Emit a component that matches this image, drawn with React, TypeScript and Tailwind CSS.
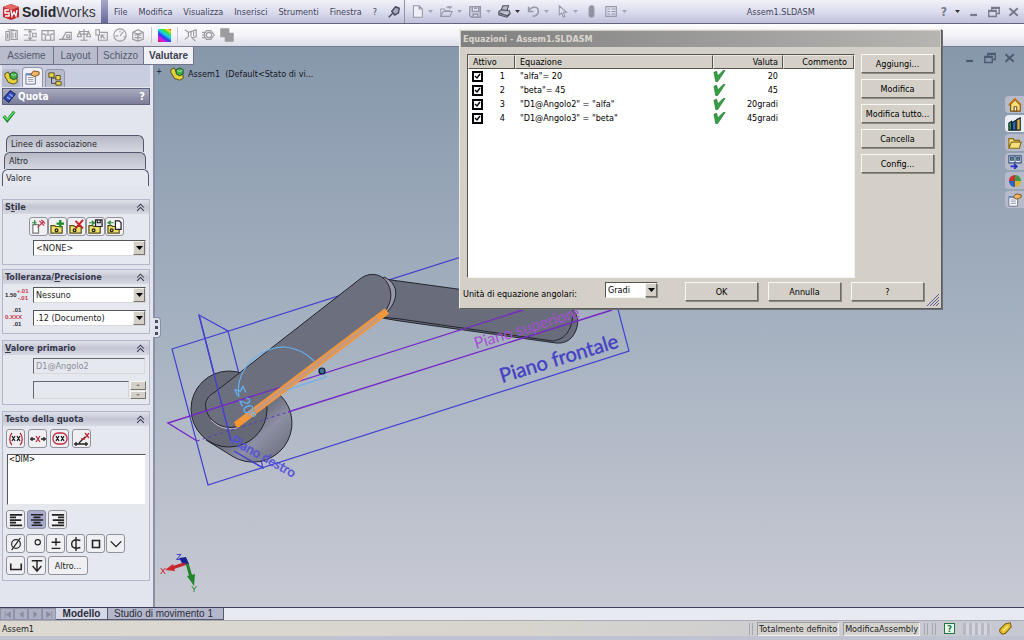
import type { ReactNode } from "react";

const menus = ["File", "Modifica", "Visualizza", "Inserisci", "Strumenti", "Finestra", "?"];

const equations = [
  { id: 1, text: '"alfa"= 20', value: "20" },
  { id: 2, text: '"beta"= 45', value: "45" },
  { id: 3, text: '"D1@Angolo2" = "alfa"', value: "20gradi" },
  { id: 4, text: '"D1@Angolo3" = "beta"', value: "45gradi" },
];

function Icon({ children, size = 14, className = "" }: { children: ReactNode; size?: number; className?: string }) {
  return (
    <svg
      width={size}
      height={size}
      viewBox="0 0 16 16"
      fill="none"
      stroke="currentColor"
      strokeWidth="1.3"
      className={`shrink-0 ${className}`}
      aria-hidden="true"
    >
      {children}
    </svg>
  );
}

function Caret({ dark = false }: { dark?: boolean }) {
  return (
    <svg width="5" height="3" viewBox="0 0 5 3" className="shrink-0" aria-hidden="true">
      <path d="M0 0h5L2.5 3z" fill={dark ? "#333" : "#a3a5b5"} />
    </svg>
  );
}

function WindowButtons({ className = "" }: { className?: string }) {
  return (
    <div className={`flex items-center gap-2 ${className}`}>
      <button aria-label="Riduci a icona">
        <Icon size={12}>
          <path d="M3 12h9" strokeWidth="3" />
        </Icon>
      </button>
      <button aria-label="Ripristina">
        <Icon size={12}>
          <path d="M5 6V2h10v8h-3M5 3h10M1 6h10v8H1zM1 7h10" strokeWidth="1.8" />
        </Icon>
      </button>
      <button aria-label="Chiudi">
        <Icon size={12}>
          <path d="M2 3l11 10M13 3L2 13" strokeWidth="2.6" />
        </Icon>
      </button>
    </div>
  );
}

/* ---------- top bars ---------- */

const quickTools: { name: string; art: ReactNode; caret: boolean; dark?: boolean }[] = [
  { name: "Nuovo", caret: true, art: <path d="M3 1h7l4 4v10H3zM10 1v4h4" fill="#eeeef6" /> },
  { name: "Apri", caret: true, art: <path d="M1 14V5h4l1 2h6v2M1 14l3-6h11l-3 6zM8 4c1-3 4-3 5 0m0 0l1-3m-1 3l-3-1" /> },
  { name: "Salva", caret: true, art: <path d="M1 2h13v13H3l-2-2zM4 2v6h8V2M5 15v-4h6v4M6 4h4" strokeWidth="1.8" /> },
  { name: "Stampa", caret: true, dark: true, art: <path d="M4 6l2-5h7l-2 6M1 8l3-2 10 1 1 4-4 4-10-3zM2 10l9 3 4-3" fill="#b9bccb" /> },
  { name: "Annulla", caret: true, art: <path d="M2 2v6h6M2 8c3-7 12-7 12 0 0 4-4 6-7 6" strokeWidth="2" /> },
  { name: "Seleziona", caret: true, art: <path d="M4 1v11l3-2 2 5 2-1-2-5h4z" fill="#e0e1ee" /> },
  { name: "Ricostruisci", caret: false, art: <><rect x="5" y="1" width="6" height="14" rx="3" fill="#8c8e9c" /><circle cx="8" cy="5" r="1" /><circle cx="8" cy="10" r="1" /></> },
  { name: "Opzioni", caret: true, art: <path d="M1 2h13v12H1zM3 5h3M3 8h3M3 11h3M8 5h5M8 8h5M8 11h5" /> },
];

function Header() {
  return (
    <header className="flex h-6 shrink-0 items-center border-b border-[#62647c] bg-linear-to-b from-[#f1f1f8] via-[#dcdded] to-[#c0c1dc]">
      <div className="flex h-full w-[101px] shrink-0 items-center gap-[3px] bg-linear-to-b from-[#f4f4f9] to-[#cfcfdf] pl-[3px]">
        <svg width="16" height="16" viewBox="0 0 16 16" aria-hidden="true">
          <path d="M0 3l8-3 8 3v10l-8 3-8-3z" fill="#c3262c" />
          <path d="M0 3l8-3 8 3-8 3z" fill="#e26a64" />
          <path d="M6 6H2v3h4v3H2M8 6l1 6 2-4 2 4 1-6" fill="none" stroke="#fff" strokeWidth="1.4" />
        </svg>
        <span className="font-['Liberation_Sans',sans-serif] text-sm leading-4 text-[#3b3b44]">
          <b className="text-[#26262d]">Solid</b>Works
        </span>
      </div>
      <div className="h-full w-[7px] shrink-0 bg-linear-to-b from-[#a8a9c8] to-[#67699a]" />
      <nav className="flex h-full shrink-0 items-center gap-[11px] border-r border-[#9092aa] pr-1 pl-1.5 text-[#43455d]">
        {menus.map((m) => (
          <button key={m}>{m}</button>
        ))}
        <button aria-label="Fissa il menu">
          <Icon size={12}>
            <path d="M1 15l5-5M5 7l4 5 5-3 1-6-5-2z" fill="#a7a9bb" strokeWidth="1.8" />
          </Icon>
        </button>
      </nav>
      <div className="flex items-center gap-[7px] pl-1.5 text-[#9799aa]">
        {quickTools.map((t) => (
          <div key={t.name} className="flex items-center gap-1">
            <button aria-label={t.name} className={t.dark ? "text-[#4c4e5e]" : ""}>
              <Icon size={13}>{t.art}</Icon>
            </button>
            {t.caret && <Caret dark={t.dark} />}
          </div>
        ))}
      </div>
      <span className="ml-auto w-[194px] text-[#43455a]">Assem1.SLDASM</span>
      <div className="flex items-center gap-2 pr-1 text-[#77798c]">
        <button className="text-xs font-bold" aria-label="Guida">?</button>
        <Caret dark />
        <WindowButtons />
      </div>
    </header>
  );
}

const evaluateTools: ReactNode[] = [
  <path d="M1 4h4v10H1zM7 3h7v10H7zM3 2h8M9 5v6M12 5v6M3 6v6" />,
  <path d="M1 2h14M1 14h14M1 8h5M8 3v9M6 5l2-2 2 2M6 11l2 2 2-2M11 6h4v4h-4z" />,
  <path d="M1 3h14v11H1zM5 8h6v6H5zM8 3v5M1 7h4M11 7h4" />,
  <path d="M0 13h9M4 12l4-7h6v8H8zM9 8h3v3H9z" />,
  <path d="M8 1v13M4 14h8M2 4h12M0 10l3-6 2 6zM11 10l2-6 3 6zM3 7h10" />,
  <path d="M1 2h4v6H1zM6 5h8v9H4V8M7 8l4 4M7 12V8h4" />,
  <path d="M8 1a7 7 0 100 14A7 7 0 008 1zM8 9l4-5M3 9h3M8 3v2M12 10h2" />,
  <path d="M2 5l6-3 6 3v8l-6 2-6-2zM2 5l6 2 6-2M8 7v8M4 8h8M4 11h8" />,
];

const analysisTools: ReactNode[] = [
  <path d="M1 2l4 3v5l-4 3M5 5l9-3v8l-5 1 4 4M8 4v6M11 4v5" />,
  <path d="M5 3h5l4 5-4 5H5L2 8zM0 5h4M0 8h4M0 11h4M8 5a3 3 0 100 6 3 3 0 000-6z" />,
  <path d="M1 1h9v9H1zM6 6h9v9H6z" fill="#9b9b9b" />,
];

function Toolbar() {
  return (
    <div className="flex h-[22px] shrink-0 items-center gap-1 bg-linear-to-b from-[#fdfdfe] via-[#f4f4f9] to-[#dcdde8] pl-[5px] text-[#9b9b9f]">
      {evaluateTools.map((art, i) => (
        <button key={i} aria-label={`Strumento ${i + 1}`}>
          <Icon>{art}</Icon>
        </button>
      ))}
      <span className="mx-0.5 h-4 w-px bg-[#c5c6d0]" />
      <button
        aria-label="Curvatura"
        className="size-[13px] bg-[linear-gradient(35deg,#e0143c,#e01ee0_22%,#2a3cf0_40%,#18d8e8_58%,#30e040_72%,#f0e020_86%,#f03020)]"
      />
      <span className="mx-0.5 h-4 w-px bg-[#c5c6d0]" />
      {analysisTools.map((art, i) => (
        <button key={i} aria-label={`Analisi ${i + 1}`}>
          <Icon>{art}</Icon>
        </button>
      ))}
    </div>
  );
}

/* ---------- property manager ---------- */

function PartIcon() {
  return (
    <svg width="14" height="14" viewBox="0 0 16 16" aria-hidden="true">
      <path d="M1 3l4-2 2 5 3 2 5 1v4l-4 2-6-2-4-7z" fill="#e8d23c" stroke="#4b4712" />
      <path d="M7 3l4-2 4 2v5l-4 2-4-2z" fill="#3fae49" stroke="#1c4a20" />
      <path d="M8 4l3 1 3-1" stroke="#bdf0bd" fill="none" />
    </svg>
  );
}

function NoteIcon({ size = 15 }: { size?: number }) {
  return (
    <svg width={size} height={size} viewBox="0 0 16 16" aria-hidden="true">
      <path d="M1 4h10v11H1z" fill="#fff" stroke="#5d6b8c" />
      <path d="M1 4h10v2H1z" fill="#6e8fd0" />
      <path d="M3 8h6M3 10h6M3 12h6" stroke="#8a93a8" />
      <path d="M6 5l3-4 6 1v3l-5 2z" fill="#efb665" stroke="#7c4d16" />
    </svg>
  );
}

function TreeIcon() {
  return (
    <svg width="14" height="14" viewBox="0 0 16 16" aria-hidden="true">
      <path d="M4 5v8h6M4 7h6" fill="none" stroke="#333" />
      <path d="M1 1h6v5H1zM9 4h5v5H9zM9 11h6v4H9z" fill="#ecd64a" stroke="#4b4320" />
    </svg>
  );
}

function Group({ title, hot, className = "", children }: { title: string; hot: number; className?: string; children: ReactNode }) {
  return (
    <section className={`border border-[#b4b7c9] bg-[#e6e8f0] ${className}`}>
      <h2 className="flex h-[14px] items-center justify-between bg-linear-to-b from-[#dfe1ea] via-[#c3c5d2] to-[#d6d8e2] pr-1 pl-0.5 font-bold text-[#34364a]">
        <span>
          {title.slice(0, hot)}
          <u>{title[hot]}</u>
          {title.slice(hot + 1)}
        </span>
        <button aria-label={`Comprimi ${title}`}>
          <Icon size={9}>
            <path d="M2 8l6-6 6 6M2 14l6-6 6 6" strokeWidth="1.8" />
          </Icon>
        </button>
      </h2>
      {children}
    </section>
  );
}

function Select({ label, value, options, className = "" }: { label: string; value: string; options: string[]; className?: string }) {
  return (
    <div className={`relative h-4 border border-[#d8d8dc] border-t-[#55565c] border-l-[#55565c] bg-white ${className}`}>
      <select aria-label={label} defaultValue={value} className="block h-full w-full appearance-none pl-0.5 leading-3 text-[#222]">
        {options.map((o) => (
          <option key={o}>{o}</option>
        ))}
      </select>
      <span className="pointer-events-none absolute inset-y-0 right-0 flex w-3 items-center justify-center border border-[#f4f2ea] border-r-[#77756c] border-b-[#77756c] bg-[#d4d0c8]">
        <svg width="7" height="4" viewBox="0 0 7 4" aria-hidden="true">
          <path d="M0 0h7L3.5 4z" fill="#000" />
        </svg>
      </span>
    </div>
  );
}

function Tool({ name, on = false, children }: { name: string; on?: boolean; children: ReactNode }) {
  return (
    <button
      aria-label={name}
      className={`flex h-[19px] w-[19px] shrink-0 items-center justify-center rounded-[3px] border border-[#8f919c] text-[#222] ${on ? "bg-[#a9abcf]" : "bg-[#f0f0f3]"}`}
    >
      {children}
    </button>
  );
}

function Folder() {
  return <path d="M1 7h4l1 1h7v7H1z" fill="#efe06a" stroke="#55501c" />;
}

const styleTools: { name: string; art: ReactNode }[] = [
  { name: "Applica attributi predefiniti", art: <><path d="M2 6h6v9H2z" fill="#fff" stroke="#777" /><path d="M7 9l7-7M9 2l5 5M11 1l4 4" stroke="#c23048" /><path d="M1 4h5M4 1v5" stroke="#2c8a3c" /></> },
  { name: "Aggiungi stile", art: <><Folder /><path d="M11 1v8M7 5h8" stroke="#1c8c2c" strokeWidth="2.4" /><circle cx="7" cy="12" r="1.5" /></> },
  { name: "Elimina stile", art: <><Folder /><path d="M7 2l8 8M15 1L7 10" stroke="#c81c24" strokeWidth="2" /><circle cx="6" cy="12" r="1.5" /></> },
  { name: "Salva stile", art: <><Folder /><path d="M8 1h7v7H8zM10 1v3h3V1" fill="#dfe2ee" /><path d="M1 4h6M4 2l3 2-3 2" stroke="#2c8a3c" /><circle cx="6" cy="12" r="1.5" /></> },
  { name: "Carica stile", art: <><Folder /><path d="M9 2h4l2 2v7H9z" fill="#fff" /><path d="M1 4h6M4 2L1 4l3 2" stroke="#2c8a3c" /><circle cx="5" cy="12" r="1.5" /></> },
];

const symbolTools: { name: string; art: ReactNode }[] = [
  { name: "Diametro", art: <><circle cx="8" cy="8" r="5" /><path d="M3 15L13 1" /></> },
  { name: "Gradi", art: <circle cx="10" cy="6" r="3" /> },
  { name: "Più o meno", art: <path d="M8 1v9M3 6h10M3 13h10" strokeWidth="1.6" /> },
  { name: "Linea centrale", art: <path d="M13 4c-7-2-10 0-10 4s3 6 10 4M8 0v16" strokeWidth="1.6" /> },
  { name: "Quadrato", art: <path d="M4 4h8v8H4z" strokeWidth="1.8" /> },
  { name: "Svasatura", art: <path d="M2 5l6 6 6-6" strokeWidth="1.6" /> },
];

function PropertyManager() {
  return (
    <aside className="relative flex flex-1 flex-col border-r-2 border-[#8b8fa6] bg-[#e3e5ee] pr-[3px] pb-6 pl-0.5 text-[#26272f]">
      <div className="flex h-[22px] items-end gap-0.5 bg-[#c9cde0]">
        <button aria-label="Albero" className="flex h-[18px] w-[18px] items-center justify-center rounded-t-sm bg-[#b9bccd]"><PartIcon /></button>
        <button aria-label="Proprietà" className="flex h-5 w-[21px] items-center justify-center rounded-t-sm border border-b-0 border-[#9295a8] bg-[#eef0f6]"><NoteIcon /></button>
        <button aria-label="Configurazioni" className="flex h-[18px] w-5 items-center justify-center rounded-t-sm border border-b-0 border-[#9295a8] bg-[#b9bccd]"><TreeIcon /></button>
      </div>
      <div className="mt-px flex h-[17px] items-center gap-0.5 border border-[#60627c] bg-linear-to-b from-[#a9abc0] to-[#7b7d98] pr-1 text-[10px] font-bold text-white">
        <Icon size={13}>
          <path d="M1 10L9 1l6 4-8 10z" fill="#3452c8" stroke="#1a2468" />
          <path d="M5 9l4 2M8 5l4 3" stroke="#a8b8f8" />
        </Icon>
        <span className="flex-1">Quota</span>
        <button aria-label="Guida di Quota" className="text-[11px]">?</button>
      </div>
      <button aria-label="Conferma" className="mt-1 w-fit text-[#27a23a]">
        <Icon>
          <path d="M2 8l4 5 8-10" stroke="#1d8a2e" strokeWidth="3.6" />
          <path d="M2 8l4 4 8-9" stroke="#66e070" strokeWidth="1.4" />
        </Icon>
      </button>
      <div className="mt-[12px] flex flex-col" role="tablist">
        <button role="tab" className="mr-1.5 ml-1 h-[17px] rounded-t-md border border-b-0 border-[#55586c] bg-linear-to-b from-[#b7b9c6] to-[#d5d7e0] pl-1 text-left">Linee di associazione</button>
        <button role="tab" className="mr-1 ml-0.5 h-[17px] rounded-t-md border border-b-0 border-[#55586c] bg-linear-to-b from-[#b7b9c6] to-[#d5d7e0] pl-1 text-left">Altro</button>
        <button role="tab" aria-selected="true" className="mr-px h-[17px] rounded-t-md border border-b-0 border-[#55586c] bg-[#e6e8f0] pl-[3px] text-left">Valore</button>
      </div>

      <Group title="Stile" hot={1} className="mt-[13px] h-[66px]">
        <div className="mt-[3px] flex justify-start pl-[26px]">
          {styleTools.map((t) => (
            <Tool key={t.name} name={t.name}><Icon size={15}>{t.art}</Icon></Tool>
          ))}
        </div>
        <Select label="Stile corrente" value="<NONE>" options={["<NONE>"]} className="mt-1 mr-[3px] ml-[30px]" />
      </Group>

      <Group title="Tolleranza/Precisione" hot={11} className="mt-1 h-[65px]">
        <div className="mt-[3px] flex items-center pl-0.5">
          <div className="flex w-7 shrink-0 items-center font-['Liberation_Sans',sans-serif] text-[6px] leading-[7px] font-bold">
            <span>1.50</span>
            <span className="flex flex-col text-[#c8364c]">
              <span>+.01</span>
              <span className="pl-px">-.01</span>
            </span>
          </div>
          <Select label="Tipo di tolleranza" value="Nessuno" options={["Nessuno", "Di base", "Bilaterale"]} className="mr-[3px] flex-1" />
        </div>
        <div className="mt-1 flex items-center pl-0.5">
          <div className="flex w-7 shrink-0 flex-col font-['Liberation_Sans',sans-serif] text-[6px] leading-[7px] font-bold">
            <span className="pl-2">.01</span>
            <span className="text-[#c8364c]">0.XXX</span>
            <span className="pl-2">.01</span>
          </div>
          <Select label="Precisione unità" value=".12 (Documento)" options={[".12 (Documento)", ".1", ".123"]} className="mr-[3px] flex-1" />
        </div>
      </Group>

      <Group title="Valore primario" hot={0} className="mt-[6px] h-[65px]">
        <input aria-label="Nome quota" readOnly value="D1@Angolo2" className="mt-[3px] ml-[30px] block h-4 w-[112px] border border-[#d8d8dc] border-t-[#66676e] border-l-[#66676e] pl-0.5 text-[#8a8c96]" />
        <div className="mt-[7px] ml-[30px] flex h-[18px]">
          <input aria-label="Valore quota" className="w-[96px] border border-[#d8d8dc] border-t-[#66676e] border-l-[#66676e]" />
          <div className="ml-px flex flex-col gap-px">
            {["Aumenta", "Diminuisci"].map((name, i) => (
              <button key={name} aria-label={name} className="flex h-[9px] w-4 items-center justify-center border border-[#f6f5ee] border-r-[#77756c] border-b-[#77756c] bg-[#d4d0c8]">
                <svg width="4" height="2" viewBox="0 0 4 2" aria-hidden="true">
                  <path d={i ? "M0 0h4L2 2z" : "M0 2h4L2 0z"} fill="#8a8880" />
                </svg>
              </button>
            ))}
          </div>
        </div>
      </Group>

      <Group title="Testo della quota" hot={12} className="mt-[6px] h-[170px]">
        <div className="mt-[3px] flex gap-[3px] pl-[3px]">
          <Tool name="Parentesi"><Icon size={16}><path d="M4 2C1 5 1 11 4 14M12 2c3 3 3 9 0 12" stroke="#c02840" /><path d="M4 5l3 5M7 5l-3 5M9 5l3 5M12 5l-3 5" /></Icon></Tool>
          <Tool name="Centra quota"><Icon size={16}><path d="M0 8h5M11 8h5M2 6v4M14 6v4" /><path d="M6 5l4 6M10 5l-4 6" stroke="#c02840" /></Icon></Tool>
          <Tool name="Quota di controllo"><Icon size={16}><rect x="1" y="2" width="14" height="11" rx="5" stroke="#c02840" /><path d="M4 5l3 5M7 5l-3 5M9 5l3 5M12 5l-3 5" /></Icon></Tool>
          <Tool name="Scosta testo"><Icon size={16}><path d="M0 13h14M2 11v4M12 11v4M5 12l6-6" /><path d="M11 2l4 5M15 2l-4 5M7 8h4" stroke="#c02840" /></Icon></Tool>
        </div>
        <textarea aria-label="Testo della quota" defaultValue="<DIM>" className="mt-[6px] ml-1 block h-[51px] w-[139px] resize-none border border-[#e8e8ec] border-t-[#55565c] border-l-[#55565c] bg-white pl-px text-[8px] leading-[10px] text-black" />
        <div className="mt-[5px] flex gap-0.5 pl-[3px]">
          <Tool name="Allinea a sinistra"><Icon><path d="M1 2h14M1 5h7M1 8h13M1 11h7M1 14h14" strokeWidth="2" /></Icon></Tool>
          <Tool name="Centra" on><Icon><path d="M1 2h14M4 5h8M1 8h14M4 11h8M2 14h12" strokeWidth="1.8" /></Icon></Tool>
          <Tool name="Allinea a destra"><Icon><path d="M1 2h14M8 5h7M2 8h13M8 11h7M1 14h14" strokeWidth="2" /></Icon></Tool>
        </div>
        <div className="mt-[5px] flex gap-px pl-[3px]">
          {symbolTools.map((t) => (
            <Tool key={t.name} name={t.name}><Icon>{t.art}</Icon></Tool>
          ))}
        </div>
        <div className="mt-[3px] flex gap-0.5 pl-[3px]">
          <Tool name="Lamatura"><Icon><path d="M2 5v7h12V5" strokeWidth="1.8" /></Icon></Tool>
          <Tool name="Profondità"><Icon><path d="M2 2h12M8 2v12M3 8l5 6 5-6" strokeWidth="1.6" /></Icon></Tool>
          <button className="h-[19px] w-10 rounded-[3px] border border-[#8f919c] bg-[#f0f0f3] text-[#222]">Altro...</button>
        </div>
      </Group>

      {/* splitter grip */}
      <div className="absolute top-[252px] -right-2 flex h-[21px] w-2 flex-col items-center justify-center gap-[3px] rounded-r-sm border border-l-0 border-[#8b8fa6] bg-[#dfe1ec]">
        <span className="size-[3px] bg-[#4a4c60]" />
        <span className="size-[3px] bg-[#4a4c60]" />
        <span className="size-[3px] bg-[#4a4c60]" />
      </div>
    </aside>
  );
}

function CommandTabs() {
  const tab = "h-[18px] shrink-0 border-r border-b border-[#71748c] bg-[#b9bccd]";
  return (
    <div role="tablist" className="relative z-10 flex h-[18px] shrink-0 font-['Liberation_Sans',sans-serif] text-[10px] text-[#55586e]">
      <button role="tab" className={`${tab} w-[54px]`}>Assieme</button>
      <button role="tab" className={`${tab} w-[44px]`}>Layout</button>
      <button role="tab" className={`${tab} w-[46px]`}>Schizzo</button>
      <button role="tab" aria-selected="true" className="h-[18px] w-[50px] shrink-0 border-r border-b border-[#71748c] bg-[#f0f1f6] font-bold text-[#3c3e4e]">
        Valutare
      </button>
    </div>
  );
}

/* ---------- graphics area ---------- */

function Model() {
  return (
    <svg width="869" height="561" viewBox="155 46 869 561" className="absolute top-0 left-0" aria-hidden="true">
      <defs>
        <linearGradient id="side" x1="0" y1="0" x2="1" y2="1">
          <stop offset="0.4" stopColor="#5c5f6d" />
          <stop offset="0.65" stopColor="#8d90a4" />
          <stop offset="1" stopColor="#63666f" />
        </linearGradient>
      </defs>

      {/* planes behind the parts */}
      <g fill="none" strokeWidth="1.2">
        <path d="M172 348L593 214L629 350L208 484Z" stroke="#4340d0" />
        <path d="M199 314L228 330L263 467L234 450Z" stroke="#4340d0" />
      </g>

      {/* second arm */}
      <path d="M384 278L560 302C574 305 580 316 577 326C574 337 567 343 556 342L400 320L382 317Z" fill="#686c7b" stroke="#23252c" />
      <path d="M382 316L400 318L553 340C566 338 573 328 573 309" fill="none" stroke="#23252c" />

      {/* hub */}
      <path d="M206 439L232 455A39 39 0 0 0 280 394L266 385Z" fill="url(#side)" />
      <path d="M206 439L232 455A39 39 0 0 0 280 394" fill="none" stroke="#23252c" />
      <circle cx="229" cy="408" r="38" fill="#656976" stroke="#23252c" />

      {/* first arm */}
      <path d="M384 276C400 283 399 300 385 313L374 300Z" fill="#9699a8" stroke="#23252c" />
      <path
        d="M215 391L360 278C370 270 383 273 388 283C393 292 391 303 385 310L242 424C226 431 209 422 206 408C204 400 208 395 215 391Z"
        fill="#6c6f7e"
      />
      <path d="M266 404V385L382 309L242 424" fill="#6c6f7e" />
      <path
        d="M242 424C226 431 209 422 206 408C204 400 208 395 215 391L360 278C370 270 383 273 388 283C393 292 391 303 385 310"
        fill="none"
        stroke="#23252c"
      />
      <path d="M211 419C218 427 230 430 240 426" fill="none" stroke="#c0c2cc" />

      {/* planes seen through the parts */}
      <g fill="none" strokeWidth="1.4">
        <path d="M199 314L231 440M234 450L263 467" stroke="#4340d0" />
        <path d="M288 411L612 309M197 440L168 422L523 309" stroke="#7628c8" />
        <path d="M197 440L288 411" stroke="#5b3ac0" strokeWidth="1" strokeDasharray="3 3" />
      </g>

      {/* selected edge */}
      <path d="M236 424L387 310" stroke="#f0963c" strokeWidth="7" fill="none" />
      <path d="M248 415L378 317" stroke="#c69a82" strokeWidth="3" />
      <circle cx="238" cy="423" r="3" fill="#f8962c" />

      {/* angular dimension */}
      <g fill="none" stroke="#67b0ec" strokeWidth="1.2">
        <path d="M239 396C234 368 261 345 285 346C296 347 306 352 314 360" />
        <path d="M318 367L326 376L287 389" />
      </g>
      <circle cx="322" cy="370" r="3" fill="#3e6f9c" stroke="#10182c" strokeWidth="1.2" />
      <text x="234" y="388" transform="rotate(66 234 388)" fill="#62b4f4" fontSize="14" fontFamily="Lato, sans-serif">Σ 20°</text>

      <g fontFamily="Lato, sans-serif">
        <text x="502" y="382" transform="rotate(-17 502 382)" fontSize="20" fill="#4341c6" stroke="#4341c6" strokeWidth="0.4">Piano frontale</text>
        <text x="476" y="348" transform="rotate(-17 476 348)" fontSize="16" fill="#a44fd4">Piano superiore</text>
        <text x="230" y="442" transform="rotate(29 230 442)" fontSize="13" fill="#5250d8" stroke="#5250d8" strokeWidth="0.4">Piano destro</text>
      </g>

      {/* triad */}
      <path d="M187 562L172 567" stroke="#c42430" strokeWidth="3" />
      <path d="M165 569l8-6 2 7z" fill="#d0242c" />
      <path d="M187 562L191 576" stroke="#23842c" strokeWidth="3" />
      <path d="M187 575l8-2-1 12z" fill="#23842c" />
      <path d="M179 557l7-1 3 7-7-1z" fill="#1c2290" />
      <g fontSize="9" fontFamily="Liberation Sans, sans-serif">
        <text x="160" y="573" fill="#c42430">X</text>
        <text x="191" y="591" fill="#23842c">Y</text>
        <text x="176" y="559" fill="#2a30c0">Z</text>
      </g>
    </svg>
  );
}

const taskPane: { name: string; on?: boolean; art: ReactNode }[] = [
  { name: "Risorse", art: <><path d="M2 8l6-6 6 6v7H3V8z" fill="#f6df7c" stroke="#7a5312" /><path d="M1 8l7-7 7 7" stroke="#c07818" strokeWidth="2" /><path d="M7 10h3v5H7z" fill="#fff" stroke="#7a5312" /></> },
  { name: "Libreria del progetto", on: true, art: <><path d="M1 7l3-2v10H1z" fill="#2c9c44" stroke="#123" /><path d="M5 6l4-2v11H5z" fill="#2c68c0" stroke="#123" /><path d="M10 3l4-2v14h-4z" fill="#e0b840" stroke="#123" /></> },
  { name: "Esplora file", art: <path d="M1 14V3h5l1 2h6v2M1 14l3-7h11l-2 7z" fill="#f6e07c" stroke="#8a6a18" /> },
  { name: "Tavolozza", art: <><path d="M1 1h14v8H1zM8 1v8" fill="#e8ecf4" stroke="#35507c" /><path d="M3 3h3v3H3zM10 3h3v3h-3z" fill="#78a860" stroke="#35507c" /><path d="M3 13h7M7 10l3 3-3 3" stroke="#1c30c0" strokeWidth="2" /></> },
  { name: "Aspetti", art: <g stroke="none"><path d="M8 8V1a7 7 0 017 7z" fill="#3c9c48" /><path d="M8 8h7a7 7 0 01-7 7z" fill="#e0b428" /><path d="M8 8v7a7 7 0 01-7-7z" fill="#2e62c4" /><path d="M8 8H1a7 7 0 017-7z" fill="#cc3030" /></g> },
];

function Viewport() {
  return (
    <div className="relative min-w-0 flex-1">
      <Model />
      <div className="relative flex items-start justify-between pt-[5px] pr-2">
        <div className="flex items-center gap-1 pt-[14px] pl-px text-[#15171f]">
          <button aria-label="Espandi Assem1" className="mr-1 mb-1 text-[8px]">+</button>
          <PartIcon />
          <span className="whitespace-pre">Assem1  (Default&lt;Stato di vi...</span>
        </div>
        <WindowButtons className="text-[#4d5a70]" />
      </div>
      <div className="absolute top-[49px] right-0 flex flex-col gap-0.5">
        {taskPane.map((t) => (
          <button key={t.name} aria-label={t.name} className={`flex h-[17px] w-[19px] items-center justify-center rounded-l-sm ${t.on ? "bg-[#eceef6]" : "bg-[#b7bacb]"}`}>
            <Icon>{t.art}</Icon>
          </button>
        ))}
        <button aria-label="Proprietà personalizzate" className="flex h-[17px] w-[19px] items-center justify-center rounded-l-sm bg-[#b7bacb]">
          <NoteIcon size={14} />
        </button>
      </div>
    </div>
  );
}

/* ---------- equations dialog ---------- */

const raised = "border border-[#f8f7f2] border-r-[#6f6c64] border-b-[#6f6c64] bg-[#d4d0c8] shadow-[1px_1px_0_#8c8a82] text-black";

function EquationsDialog() {
  const th = "h-[14px] border border-[#eceae2] border-r-[#55534c] border-b-[#55534c] p-0 font-normal";
  return (
    <div role="dialog" aria-label="Equazioni" className="absolute top-[29px] left-[459px] z-20 w-[483px] border border-[#ecebe4] border-r-[#5d5c58] border-b-[#5d5c58] bg-[#d4d0c8] p-px pb-[6px] text-black shadow-[1px_1px_0_#6c7078]">
      <h1 className="flex h-4 items-center bg-linear-to-r from-[#808080] to-[#b6b5b2] pl-0.5 font-bold text-[#d8d5ce]">Equazioni - Assem1.SLDASM</h1>
      <div className="mt-[7px] flex gap-1.5 pr-1.5 pl-1.5">
        <div className="h-[224px] flex-1 border border-[#f6f5f0] border-t-[#55534c] border-l-[#55534c] bg-white">
          <table className="w-full table-fixed border-separate border-spacing-0 text-left">
            <thead className="bg-[#d4d0c8]">
              <tr>
                <th className={`${th} w-[47px] pl-1`}>Attivo</th>
                <th className={`${th} pl-1`}>Equazione</th>
                <th className={`${th} w-[70px] pr-1 text-right`}>Valuta</th>
                <th className={`${th} w-[71px] pr-1.5 text-right`}>Commento</th>
              </tr>
            </thead>
            <tbody>
              {equations.map((eq) => (
                <tr key={eq.id} className="h-[14px]">
                  <td className="p-0 pl-1">
                    <label className="flex items-center">
                      <span className="relative size-[11px]">
                        <input type="checkbox" defaultChecked className="block size-[11px] appearance-none border-2 border-black bg-white" />
                        <svg width="7" height="7" viewBox="0 0 7 7" className="pointer-events-none absolute top-0.5 left-0.5" aria-hidden="true">
                          <path d="M1 3l2 2 3-4" fill="none" stroke="#000" strokeWidth="1.4" />
                        </svg>
                      </span>
                      <span className="w-[22px] text-right">{eq.id}</span>
                    </label>
                  </td>
                  <td className="p-0 pl-[5px] whitespace-nowrap">{eq.text}</td>
                  <td className="p-0 pr-[5px]">
                    <div className="flex items-center justify-between">
                      <svg width="13" height="12" viewBox="0 0 14 12" aria-label="Risolta">
                        <path d="M1 2l3-1 1 5 6-6h2L5 12H3z" fill="#35a044" stroke="#1c6e2a" strokeWidth="0.7" />
                      </svg>
                      <span>{eq.value}</span>
                    </div>
                  </td>
                  <td />
                </tr>
              ))}
            </tbody>
          </table>
        </div>
        <div className="flex w-[73px] flex-col gap-[6px]">
          {["Aggiungi...", "Modifica", "Modifica tutto...", "Cancella", "Config..."].map((b) => (
            <button key={b} className={`h-[19px] whitespace-nowrap ${raised}`}>{b}</button>
          ))}
        </div>
      </div>
      <div className="mt-1 flex items-center pr-4 pl-0.5">
        <label htmlFor="units" className="w-[142px] pt-1">Unità di equazione angolari:</label>
        <div className="relative mb-1 h-4 w-[53px] border border-[#f4f2ea] border-t-[#55534c] border-l-[#55534c] bg-white">
          <select id="units" defaultValue="Gradi" className="block h-full w-full appearance-none pl-0.5 leading-3">
            <option>Gradi</option>
            <option>Radianti</option>
          </select>
          <span className={`pointer-events-none absolute inset-y-0 right-0 flex w-3 items-center justify-center ${raised}`}>
            <svg width="7" height="4" viewBox="0 0 7 4" aria-hidden="true"><path d="M0 0h7L3.5 4z" /></svg>
          </span>
        </div>
        <div className="ml-auto flex gap-[10px] pb-px">
          {["OK", "Annulla", "?"].map((b) => (
            <button key={b} className={`h-[19px] w-[73px] ${raised}`}>{b}</button>
          ))}
        </div>
      </div>
      <svg width="12" height="12" viewBox="0 0 12 12" className="absolute right-0.5 bottom-0.5" aria-hidden="true">
        <path d="M0 12L12 0M3 12l9-9M6 12l6-6M9 12l3-3" stroke="#5a5690" />
      </svg>
    </div>
  );
}

/* ---------- bottom bars ---------- */

function BottomTabs() {
  return (
    <div className="flex h-[13px] shrink-0 border-t border-[#3b3e5c] bg-[#e8eaf1] font-['Liberation_Sans',sans-serif] text-[10px] leading-[11px] text-[#2c2e3c]">
      {["M4 2v12M13 3L6 8l7 5z", "M11 3L5 8l6 5z", "M5 3l6 5-6 5z", "M12 2v12M3 3l7 5-7 5z"].map((d, i) => (
        <button key={d} aria-label={`Scorri schede ${i + 1}`} className="flex w-[14px] items-center justify-center border border-[#8f92a8] bg-[#adb0c3] text-[#888ba0]">
          <Icon size={9}><path d={d} fill="currentColor" /></Icon>
        </button>
      ))}
      <button className="w-[52px] border-r border-b border-[#55586c] bg-[#d5d8e5] font-bold">Modello</button>
      <button className="w-[116px] border-r border-b border-[#55586c] bg-[#b4b7c9] pr-1 whitespace-nowrap">Studio di movimento 1</button>
    </div>
  );
}

function StatusBar() {
  const cell = "flex h-[14px] items-center border border-[#f2f1ee] border-t-[#9c9ca0] border-l-[#9c9ca0] bg-[#d5d3ce] px-px whitespace-nowrap";
  return (
    <footer className="flex h-5 shrink-0 items-center gap-1 border-t border-b-4 border-t-[#a9abb5] border-b-[#bfc2d0] bg-linear-to-r from-[#dcd9d0] via-[#d8d5ce] to-[#c6c8d2] pl-0.5 text-[#1c1d24]">
      <span>Assem1</span>
      <div className="ml-auto h-3 w-1 border-x border-[#a5a7b0]" />
      <div className={cell}>Totalmente definito</div>
      <div className={cell}>ModificaAssembly</div>
      <div className="h-3 w-1 border-x border-[#a5a7b0]" />
      <div className="h-3 w-1 border-x border-[#a5a7b0]" />
      <button aria-label="Guida rapida" className="ml-1 flex size-[11px] items-center justify-center border border-[#287048] bg-[#e4f6ea] font-bold text-[#187838]">?</button>
      <div className="ml-1 h-3 w-7 bg-[repeating-linear-gradient(90deg,#b6b8c2_0_3px,#d4d5dc_3px_6px)]" />
      <button aria-label="Etichette" className="mr-3 ml-1">
        <Icon size={13}>
          <path d="M1 9l7-7 6-1 1 5-7 8-4 1-3-3z" fill="#e8c02c" stroke="#7c5c10" />
          <path d="M5 11l6-6" stroke="#fff2a0" />
        </Icon>
      </button>
    </footer>
  );
}

export default function App() {
  return (
    <div className="relative flex min-h-screen flex-col bg-[#c5c9d5] font-['DejaVu_Sans_Condensed','DejaVu_Sans',sans-serif] text-[9px] leading-3">
      <Header />
      <Toolbar />
      <main className="flex flex-1 border-t border-[#787b90] bg-linear-to-b from-[#8798ac] via-[#a5b1c0] to-[#c8cad3]">
        <div className="flex w-[155px] shrink-0 flex-col">
          <CommandTabs />
          <PropertyManager />
        </div>
        <Viewport />
      </main>
      <BottomTabs />
      <StatusBar />
      <EquationsDialog />
    </div>
  );
}
